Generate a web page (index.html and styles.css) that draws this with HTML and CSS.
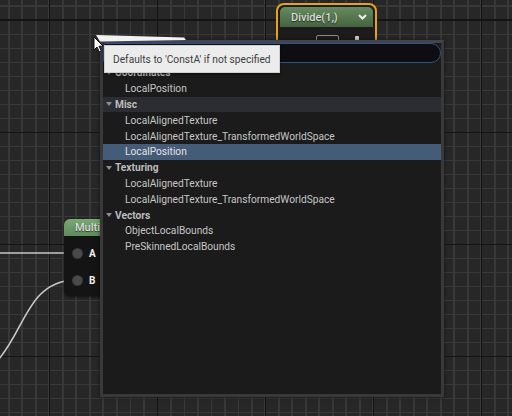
FILE: index.html
```html
<!DOCTYPE html>
<html>
<head>
<meta charset="utf-8">
<link rel="stylesheet" href="styles.css">
</head>
<body>
<div class="canvas">
  <svg class="wires" width="512" height="416" viewBox="0 0 512 416">
    <line x1="0" y1="253" x2="74" y2="253" class="wire"/>
    <path d="M-2,360 C 25,330 28,282 74,280" class="wire"/>
  </svg>

  <div class="node multi">
    <div class="node-head multi-head">Multi</div>
    <div class="node-body">
      <div class="pin"><span class="pin-dot"></span><span class="pin-label">A</span></div>
      <div class="pin"><span class="pin-dot"></span><span class="pin-label">B</span></div>
    </div>
  </div>

  <div class="node divide">
    <div class="node-head divide-head">
      <span>Divide(1,)</span>
      <svg class="chev" width="9" height="6" viewBox="0 0 9 6"><polyline points="1,1 4.5,4.5 8,1"/></svg>
    </div>
    <div class="divide-body">
      <span class="field"></span>
      <span class="knob"></span>
    </div>
  </div>

  <div class="popup">
    <div class="search"></div>
    <div class="list">
      <div class="row cat"><span class="tri"></span>Coordinates</div>
      <div class="row item">LocalPosition</div>
      <div class="row cat hover"><span class="tri"></span>Misc</div>
      <div class="row item">LocalAlignedTexture</div>
      <div class="row item">LocalAlignedTexture_TransformedWorldSpace</div>
      <div class="row item selected">LocalPosition</div>
      <div class="row cat"><span class="tri"></span>Texturing</div>
      <div class="row item">LocalAlignedTexture</div>
      <div class="row item">LocalAlignedTexture_TransformedWorldSpace</div>
      <div class="row cat"><span class="tri"></span>Vectors</div>
      <div class="row item">ObjectLocalBounds</div>
      <div class="row item">PreSkinnedLocalBounds</div>
    </div>
  </div>

  <svg class="wedge" width="512" height="60" viewBox="0 0 512 60">
    <polygon points="96,35 184,37.5 186,40 100,41.5" fill="#f2f2f2"/>
  </svg>

  <div class="tooltip">Defaults to 'ConstA' if not specified</div>

  <svg class="cursor" width="12" height="18" viewBox="0 0 12 18">
    <path d="M1,1 L1,14 L4,11 L6.3,16 L8.3,15.1 L6,10.2 L10.2,10.2 Z" fill="#ffffff" stroke="#111" stroke-width="1"/>
  </svg>
</div>
</body>
</html>
```

FILE: styles.css
```css
html, body {
  margin: 0;
  padding: 0;
}
body {
  width: 512px;
  height: 416px;
  overflow: hidden;
  background: #262626;
  font-family: Roboto, "Liberation Sans", sans-serif;
}
.canvas {
  position: relative;
  width: 512px;
  height: 416px;
  overflow: hidden;
  background-color: #272727;
  background-image:
    repeating-linear-gradient(90deg, transparent 0 49px, #141414 49px 50.5px, transparent 50.5px 108px),
    repeating-linear-gradient(180deg, transparent 0 19.5px, #141414 19.5px 21px, transparent 21px 112px),
    repeating-linear-gradient(90deg, transparent 0 8px, #383838 8px 9.6px, transparent 9.6px 13.5px),
    repeating-linear-gradient(180deg, transparent 0 5.5px, #383838 5.5px 7.1px, transparent 7.1px 14px);
}
.wires {
  position: absolute;
  left: 0;
  top: 0;
}
.wire {
  fill: none;
  stroke: #c9c9c9;
  stroke-width: 1.6;
}

/* nodes */
.node {
  position: absolute;
  box-sizing: border-box;
}
.multi {
  left: 64px;
  top: 219px;
  width: 60px;
  height: 77px;
  border-radius: 6px;
  background: #141414;
  box-shadow: 0 1px 3px rgba(0,0,0,0.6);
  overflow: hidden;
  display: flex;
  flex-direction: column;
}
.node-head {
  display: flex;
  align-items: center;
  color: #dcdcdc;
  font-size: 11px;
  font-weight: 500;
  text-shadow: 0 1px 1px rgba(0,0,0,0.6);
}
.multi-head {
  height: 17px;
  padding-left: 11px;
  background: linear-gradient(180deg, #7aa874 0%, #5f8c5a 100%);
}
.node-body {
  display: flex;
  flex-direction: column;
  gap: 9px;
  padding: 8px 0 0 9px;
}
.pin {
  display: flex;
  align-items: center;
  height: 18px;
  gap: 7px;
}
.pin-dot {
  width: 9px;
  height: 9px;
  border-radius: 50%;
  background: #4a4a4a;
  box-shadow: 0 0 0 1px #3a3a3a;
}
.pin-label {
  color: #f0f0f0;
  font-size: 10px;
  font-weight: 700;
}

.divide {
  left: 276px;
  top: 3px;
  width: 101px;
  height: 60px;
  border: 2.5px solid #e6a21b;
  border-radius: 8px;
  background: #1c1c1c;
  padding: 2px;
  display: flex;
  flex-direction: column;
}
.divide-head {
  height: 20px;
  justify-content: space-between;
  padding: 0 6px 0 11px;
  border-radius: 5px 5px 0 0;
  background: linear-gradient(180deg, #668c5f 0%, #45633f 100%);
  font-size: 11px;
}
.chev polyline {
  fill: none;
  stroke: #f0f0f0;
  stroke-width: 2;
}
.divide-body {
  display: flex;
  align-items: flex-start;
  padding: 8px 0 0 36px;
  gap: 16px;
}
.field {
  width: 21px;
  height: 10px;
  border: 1px solid #8a8a8a;
  border-radius: 2px;
}
.knob {
  width: 4px;
  height: 6px;
  margin-top: 1px;
  background: #cfcfcf;
  border-radius: 1px;
}

/* popup */
.popup {
  position: absolute;
  left: 100px;
  top: 40px;
  width: 344px;
  height: 357px;
  box-sizing: border-box;
  border: 3px solid #393939;
  border-top-color: #44454c;
  background: #1b1b1b;
  display: flex;
  flex-direction: column;
  box-shadow: 0 0 4px rgba(0,0,0,0.5);
}
.search {
  height: 20px;
  box-sizing: border-box;
  border: 1.5px solid #2b5591;
  border-radius: 3px 11px 11px 3px;
  background: #0d0d12;
}
.list {
  margin-top: 2px;
  display: flex;
  flex-direction: column;
  background: #1b1b1c;
}
.row {
  height: 15.8px;
  display: flex;
  align-items: center;
  font-size: 10.2px;
  color: #c6c6c6;
  white-space: nowrap;
}
.item {
  padding-left: 22px;
}
.cat {
  padding-left: 3px;
  font-weight: 700;
  color: #bcbcbc;
  gap: 3px;
}
.cat.hover {
  background: #2b2d32;
}
.selected {
  background: #455c78;
  color: #e2e2e2;
}
.tri {
  width: 0;
  height: 0;
  border-left: 3.5px solid transparent;
  border-right: 3.5px solid transparent;
  border-top: 4.5px solid #8e8e8e;
}

/* overlays */
.wedge {
  position: absolute;
  left: 0;
  top: 0;
}
.tooltip {
  position: absolute;
  left: 104px;
  top: 45px;
  width: 176px;
  height: 28px;
  box-sizing: border-box;
  padding-left: 8px;
  display: flex;
  align-items: center;
  background: #ececec;
  border: 1px solid #d0d0d0;
  color: #3c3c3c;
  font-size: 10.2px;
  white-space: nowrap;
  box-shadow: 0 1px 3px rgba(0,0,0,0.5);
}
.cursor {
  position: absolute;
  left: 93px;
  top: 36px;
}
```
